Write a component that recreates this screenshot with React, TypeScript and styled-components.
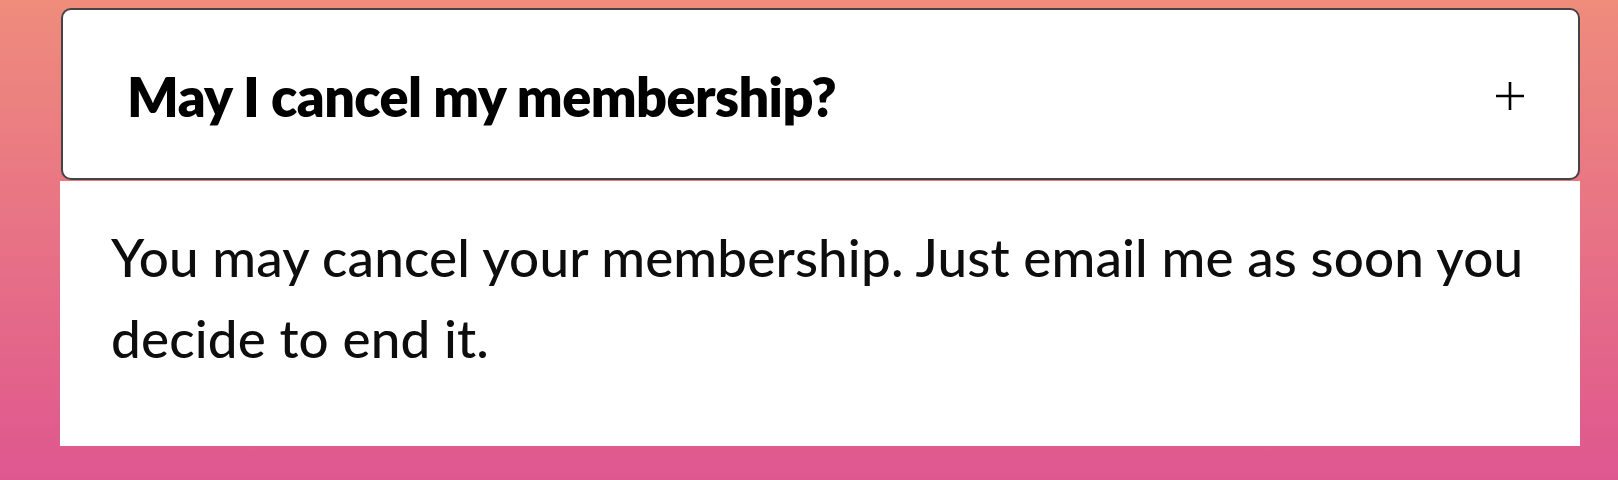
import React from "react";
import styled, { createGlobalStyle } from "styled-components";

const GlobalStyle = createGlobalStyle`
  html, body { margin: 0; padding: 0; }
  body { font-family: Lato, "Liberation Sans", sans-serif; }
`;

const Page = styled.div`
  min-height: 480px;
  box-sizing: border-box;
  padding: 8px 38px 0 60px;
  background: linear-gradient(to bottom, #ef8c7c 0%, #df578f 100%);
`;

const Item = styled.section`
  width: 1520px;
  display: flex;
  flex-direction: column;
`;

const Question = styled.button`
  box-sizing: border-box;
  height: 172px;
  margin-left: 1px;
  display: flex;
  align-items: center;
  justify-content: space-between;
  padding: 4px 53px 0 64px;
  background: #ffffff;
  border: 2.5px solid #444444;
  border-radius: 10px;
  font-family: Lato, "Liberation Sans", sans-serif;
  font-weight: 800;
  font-size: 54px;
  letter-spacing: -0.6px;
  color: #000000;
  text-align: left;
  cursor: pointer;
`;

const Answer = styled.div`
  margin-top: 1px;
  background: #ffffff;
  padding: 35px 48px 68px 51px;
  font-size: 53px;
  font-weight: 500;
  letter-spacing: 0.15px;
  line-height: 81px;
  color: #0d0d0d;
`;

const Plus = () => (
  <svg width="30" height="30" viewBox="0 0 30 30" aria-hidden="true">
    <path d="M15 1v28M1 15h28" stroke="#000" strokeWidth="2.6" fill="none" />
  </svg>
);

export default function App() {
  return (
    <>
      <GlobalStyle />
      <Page>
        <Item>
          <Question>
            <span>May I cancel my membership?</span>
            <Plus />
          </Question>
          <Answer>
            You may cancel your membership. Just email me as soon you decide to end it.
          </Answer>
        </Item>
      </Page>
    </>
  );
}
